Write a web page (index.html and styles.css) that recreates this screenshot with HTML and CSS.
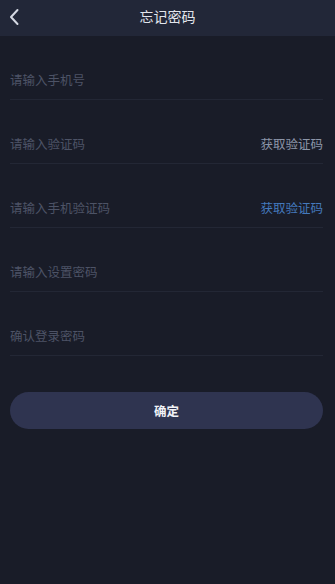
FILE: index.html
```html
<!DOCTYPE html>
<html lang="zh">
<head>
<meta charset="utf-8">
<link rel="stylesheet" href="styles.css">
</head>
<body>
<div class="page">
  <header class="bar">
    <svg class="back" width="12" height="18" viewBox="0 0 12 18"><path d="M9.5 2 L3 9 L9.5 16" fill="none" stroke="#d4d8e2" stroke-width="2" stroke-linecap="round" stroke-linejoin="round"/></svg>
    <div class="title">忘记密码</div>
  </header>
  <div class="form">
    <div class="row"><span class="ph">请输入手机号</span></div>
    <div class="row"><span class="ph">请输入验证码</span><span class="code">获取验证码</span></div>
    <div class="row"><span class="ph">请输入手机验证码</span><span class="code blue">获取验证码</span></div>
    <div class="row"><span class="ph">请输入设置密码</span></div>
    <div class="row"><span class="ph">确认登录密码</span></div>
    <button class="submit">确定</button>
  </div>
</div>
</body>
</html>
```
FILE: styles.css
```css
* { box-sizing: border-box; }
html, body { margin: 0; padding: 0; }
body {
  background: #191c28;
  font-family: "Noto Sans CJK SC", "Noto Sans", sans-serif;
  width: 335px;
  height: 584px;
  overflow: hidden;
}
.bar {
  height: 36px;
  background: #222738;
  display: flex;
  align-items: center;
  justify-content: center;
  position: relative;
}
.back {
  position: absolute;
  left: 8px;
  top: 8px;
}
.title {
  color: #e2e5ec;
  font-size: 14px;
  line-height: 16px;
  margin-top: -4px;
}
.form {
  padding: 0 12px 0 10px;
  display: flex;
  flex-direction: column;
}
.row {
  height: 64px;
  border-bottom: 1px solid #232735;
  display: flex;
  align-items: flex-end;
  justify-content: space-between;
  padding-bottom: 11px;
  font-size: 12.5px;
  line-height: 16px;
}
.ph { color: #4d5366; }
.code { color: #8c95a8; }
.code.blue { color: #4479bd; }
.submit {
  margin-top: 36px;
  height: 37px;
  border: none;
  border-radius: 19px;
  background: #2f3450;
  color: #f2f3f7;
  font-family: inherit;
  font-size: 12.5px;
  font-weight: bold;
  padding: 0;
}
```
